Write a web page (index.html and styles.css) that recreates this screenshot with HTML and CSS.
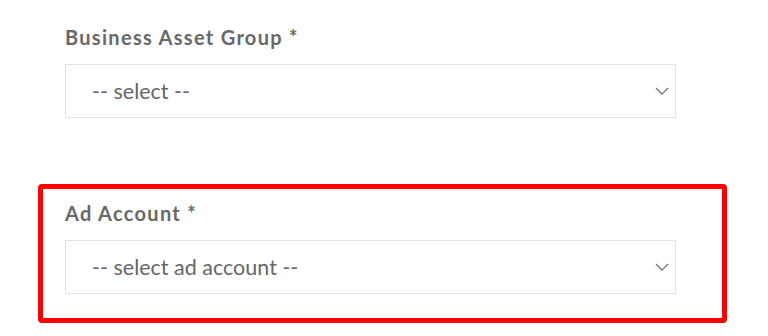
FILE: index.html
```html
<!DOCTYPE html>
<html>
<head>
<meta charset="utf-8">
<link rel="stylesheet" href="styles.css">
</head>
<body>
<div class="page">
  <div class="field first">
    <div class="label">Business Asset Group *</div>
    <div class="select">
      <span class="value">-- select --</span>
      <svg class="chev" width="14" height="8" viewBox="0 0 14 8"><path d="M1 1 L7 7 L13 1" fill="none" stroke="#777" stroke-width="1.4"/></svg>
    </div>
  </div>
  <div class="highlight">
    <div class="field">
      <div class="label">Ad Account *</div>
      <div class="select">
        <span class="value">-- select ad account --</span>
        <svg class="chev" width="14" height="8" viewBox="0 0 14 8"><path d="M1 1 L7 7 L13 1" fill="none" stroke="#777" stroke-width="1.4"/></svg>
      </div>
    </div>
  </div>
</div>
</body>
</html>
```

FILE: styles.css
```css
html, body {
  margin: 0;
  padding: 0;
  background: #fff;
}
body {
  font-family: Lato, "Open Sans", sans-serif;
  width: 768px;
  height: 336px;
  overflow: hidden;
}
.page {
  padding-top: 26px;
}
.field {
  display: flex;
  flex-direction: column;
  gap: 16px;
  width: 611px;
}
.field.first {
  margin-left: 65px;
}
.label {
  font-size: 20px;
  line-height: 22px;
  font-weight: 700;
  color: #686868;
  letter-spacing: 1.3px;
}
.select {
  box-sizing: border-box;
  height: 54px;
  border: 1px solid #e3e3e3;
  display: flex;
  align-items: center;
  justify-content: space-between;
  padding: 0 6px 0 26px;
  background: #fff;
}
.value {
  font-size: 21.5px;
  color: #666;
}
.chev {
  display: block;
}
.highlight {
  box-sizing: border-box;
  margin-top: 66px;
  margin-left: 38px;
  width: 689px;
  border: 5px solid #ff0000;
  border-radius: 4px;
  padding: 13px 22px 24px;
}
```
